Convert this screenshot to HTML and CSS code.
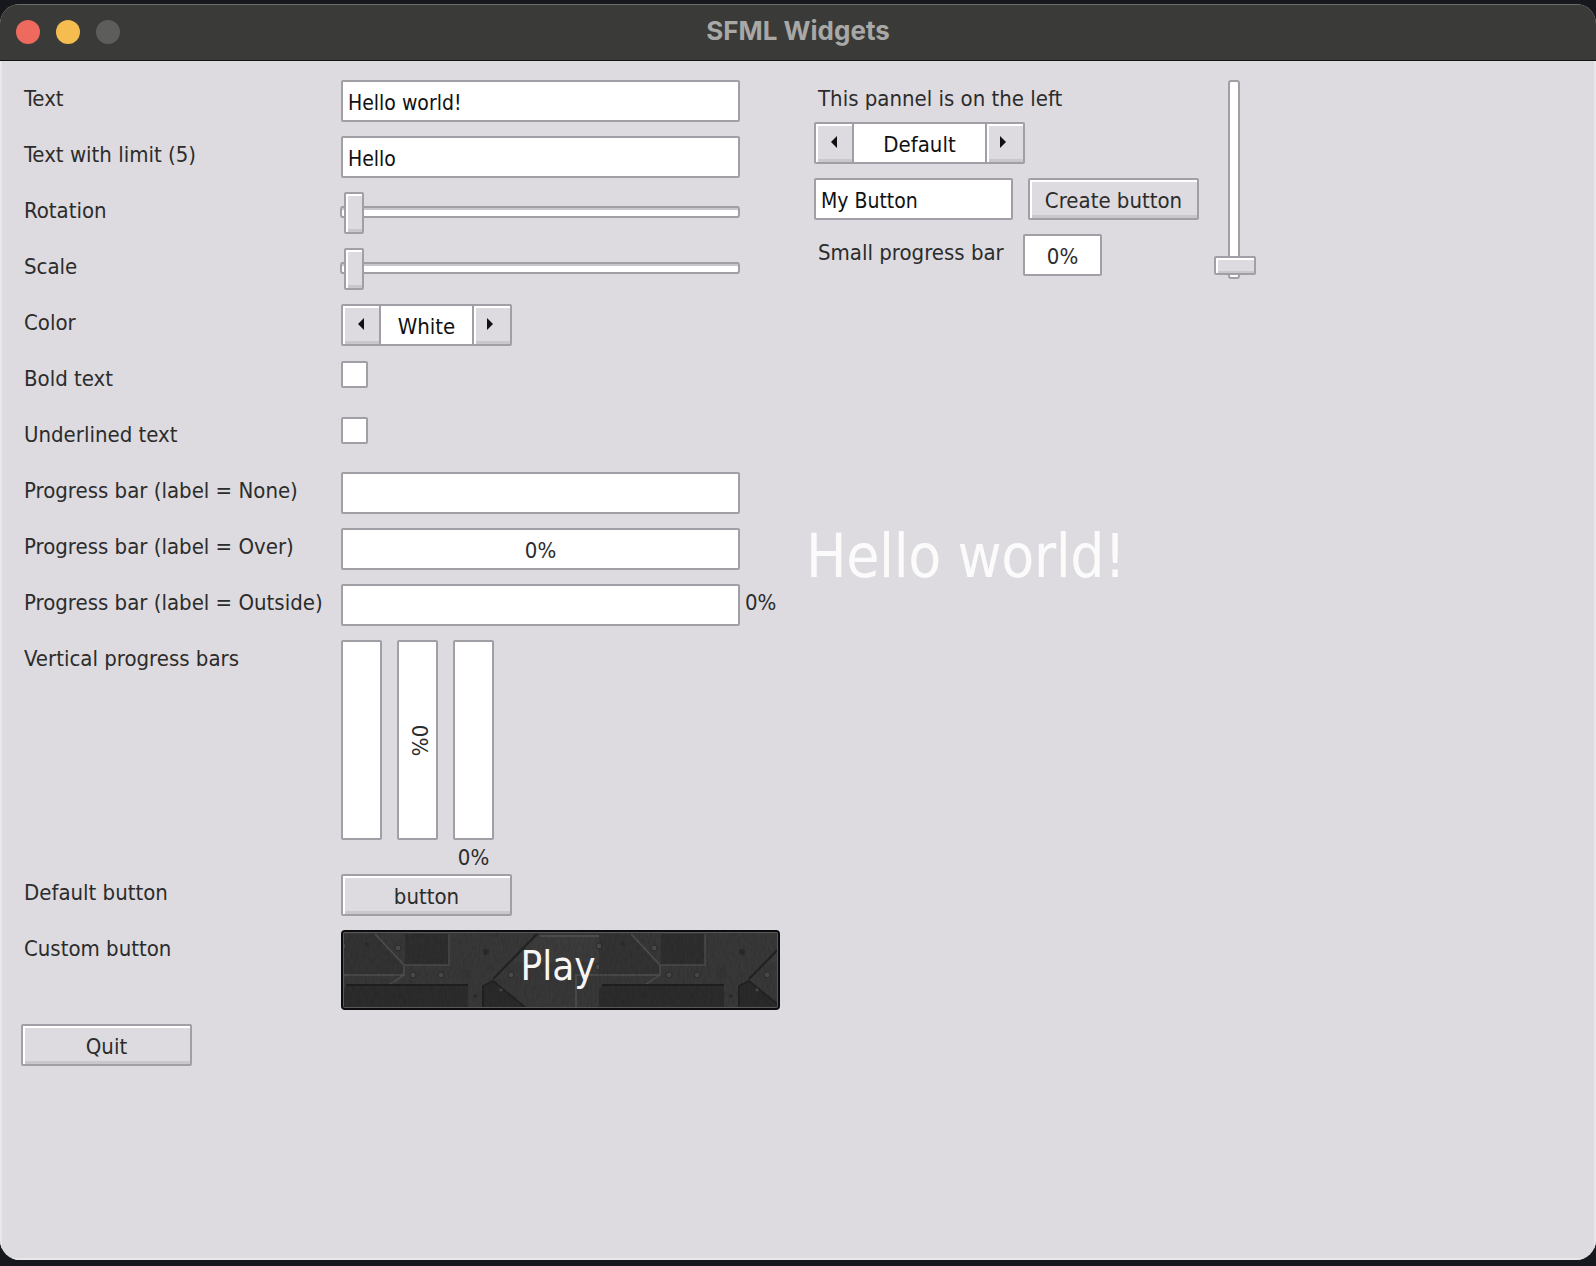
FILE: index.html
```html
<!DOCTYPE html>
<html lang="en">
<head>
    <meta charset="UTF-8">
    <title>SFML Widgets</title>
    <link rel="stylesheet" href="styles.css">
</head>
<body>

    <div class="window">
        <div class="titlebar">
            <div class="lights">
                <span class="light light-close"></span>
                <span class="light light-min"></span>
                <span class="light light-max"></span>
            </div>
            <div class="title">SFML Widgets</div>
        </div>

        <div class="content">
            <!-- left form -->
            <div class="left-col">
                <div class="form">
                    <div class="label">Text</div>
                    <div class="field"><div class="box input wide">Hello world!</div></div>

                    <div class="label">Text with limit (5)</div>
                    <div class="field"><div class="box input wide">Hello</div></div>

                    <div class="label">Rotation</div>
                    <div class="field">
                        <div class="slider wide"><div class="track"></div><div class="thumb"></div></div>
                    </div>

                    <div class="label">Scale</div>
                    <div class="field">
                        <div class="slider wide"><div class="track"></div><div class="thumb"></div></div>
                    </div>

                    <div class="label">Color</div>
                    <div class="field">
                        <div class="selector color-selector">
                            <div class="arrow-btn"><span class="arrow-left"></span></div>
                            <div class="selector-value">White</div>
                            <div class="arrow-btn"><span class="arrow-right"></span></div>
                        </div>
                    </div>

                    <div class="label">Bold text</div>
                    <div class="field"><div class="box checkbox"></div></div>

                    <div class="label">Underlined text</div>
                    <div class="field"><div class="box checkbox"></div></div>

                    <div class="label">Progress bar (label = None)</div>
                    <div class="field"><div class="box wide"></div></div>

                    <div class="label">Progress bar (label = Over)</div>
                    <div class="field"><div class="box wide centered">0%</div></div>

                    <div class="label">Progress bar (label = Outside)</div>
                    <div class="field outside">
                        <div class="box wide"></div>
                        <span class="outside-label">0%</span>
                    </div>

                    <div class="label">Vertical progress bars</div>
                    <div class="field vbars">
                        <div class="vbar-wrap"><div class="box vbar"></div></div>
                        <div class="vbar-wrap"><div class="box vbar centered"><span class="rotated">0%</span></div></div>
                        <div class="vbar-wrap"><div class="box vbar"></div><span class="vbar-label">0%</span></div>
                    </div>

                    <div class="label">Default button</div>
                    <div class="field"><div class="button default-btn">button</div></div>

                    <div class="label">Custom button</div>
                    <div class="field">
                        <div class="play">
                            <svg class="play-bg" width="435" height="76" xmlns="http://www.w3.org/2000/svg">
                                <defs>
                                    <filter id="grain">
                                        <feTurbulence type="fractalNoise" baseFrequency="0.5 0.15" numOctaves="2" seed="4"/>
                                        <feColorMatrix values="0 0 0 0 0  0 0 0 0 0  0 0 0 0 0  1.2 0 0 0 -0.45"/>
                                    </filter>
                                    <pattern id="plate" width="256" height="76" patternUnits="userSpaceOnUse">
                                        <rect width="256" height="76" fill="#383838"/>
                                        <path d="M0 2H32L61 33V43H0Z" fill="#333"/>
                                        <path d="M62 2H106V33H62Z" fill="#2e2e2e"/>
                                        <path d="M62 33H106V2" stroke="#4b4b4b" stroke-width="1.5" fill="none"/>
                                        <path d="M0 43H61V33L32 2M61 43L46 53" stroke="#4f4f4f" stroke-width="1.5" fill="none"/>
                                        <path d="M3 53H125V76H0V58Z" fill="#2c2c2c"/>
                                        <path d="M3 53H125" stroke="#1f1f1f" stroke-width="2"/>
                                        <path d="M140 76V54L150 49L183 76Z" fill="#2a2a2a" stroke="#222" stroke-width="2"/>
                                        <path d="M150 47L194 2" stroke="#222" stroke-width="2" fill="none"/>
                                        <path d="M195 4H265V30H170Z" fill="#3c3c3c"/>
                                        <path d="M197 4H256" stroke="#555" stroke-width="1.5"/>
                                        <path d="M233 76V43H256" stroke="#505050" stroke-width="1.5" fill="none"/>
                                        <g fill="#4a4a4a" stroke="#292929">
                                            <circle cx="55" cy="16" r="3"/>
                                            <circle cx="70" cy="43" r="3"/>
                                            <circle cx="98" cy="43" r="3"/>
                                            <circle cx="168" cy="43" r="3"/>
                                            <circle cx="158" cy="58" r="2"/>
                                            <circle cx="0" cy="14" r="3"/>
                                            <circle cx="256" cy="14" r="3"/>
                                            <circle cx="255" cy="35" r="3"/>
                                        </g>
                                        <g fill="#2a2a2a">
                                            <circle cx="143" cy="20" r="3"/>
                                            <circle cx="122" cy="42" r="5" opacity="0.3"/>
                                            <circle cx="24" cy="12" r="2"/>
                                            <circle cx="132" cy="64" r="2"/>
                                        </g>
                                    </pattern>
                                </defs>
                                <rect width="435" height="76" fill="url(#plate)"/>
                                <rect width="435" height="76" filter="url(#grain)" opacity="0.2"/>
                                <rect x="0.5" y="0.5" width="434" height="75" fill="none" stroke="#585858"/>
                            </svg>
                            <span class="play-text">Play</span>
                        </div>
                    </div>
                </div>

                <div class="button quit-btn">Quit</div>
            </div>

            <!-- right panel -->
            <div class="right-col">
                <div class="panel">
                    <div class="panel-form">
                        <div class="panel-label">This pannel is on the left</div>
                        <div class="selector default-selector">
                            <div class="arrow-btn"><span class="arrow-left"></span></div>
                            <div class="selector-value">Default</div>
                            <div class="arrow-btn"><span class="arrow-right"></span></div>
                        </div>
                        <div class="panel-row">
                            <div class="box input name-input">My Button</div>
                            <div class="button create-btn">Create button</div>
                        </div>
                        <div class="panel-row small-row">
                            <div class="panel-label small-label">Small progress bar</div>
                            <div class="box centered small-bar">0%</div>
                        </div>
                    </div>
                    <div class="vslider"><div class="vtrack"></div><div class="vthumb"></div></div>
                </div>
                <div class="big-text">Hello world!</div>
            </div>
        </div>
    </div>

</body>
</html>
```

FILE: styles.css
```css
* {
    box-sizing: border-box;
}
body {
    margin: 0;
    height: 1266px;
    background-color: #17181d;
    font-family: 'DejaVu Sans Condensed', 'DejaVu Sans', sans-serif;
    font-stretch: condensed;
    font-size: 22px;
    color: #2c2c2c;
    overflow: hidden;
}
.window {
    margin-top: 4px;
    height: 1256px;
    border-radius: 20px;
    overflow: hidden;
    background-color: #dddbdf;
    display: flex;
    flex-direction: column;
}

/* title bar */
.titlebar {
    height: 57px;
    flex: none;
    background-color: #3a3a38;
    border-bottom: 1px solid #111;
    box-shadow: inset 0 1px 0 #6c6c6a;
    display: flex;
    align-items: center;
    position: relative;
}
.lights {
    display: flex;
    gap: 16px;
    padding-left: 16px;
}
.light {
    width: 24px;
    height: 24px;
    border-radius: 50%;
}
.light-close { background-color: #ee6a5f; }
.light-min { background-color: #f5bd4f; }
.light-max { background-color: #5d5d5b; }
.title {
    position: absolute;
    left: 0;
    right: 0;
    padding-bottom: 4px;
    text-align: center;
    font-family: 'Inter', 'Liberation Sans', sans-serif;
    font-stretch: normal;
    font-weight: 700;
    font-size: 26px;
    color: #a8a8a6;
}

/* layout */
.content {
    flex: 1;
    display: flex;
    padding-top: 19px;
    box-shadow: inset 2px 0 0 #e8e7ea, inset -2px 0 0 #e8e7ea, inset 0 -2px 0 #e8e7ea;
}
.left-col {
    width: 804px;
    flex: none;
}
.form {
    display: grid;
    grid-template-columns: 317px 439px;
    row-gap: 14px;
    padding-left: 24px;
}
.label {
    line-height: 24px;
    padding-top: 7px;
}
.field {
    min-height: 42px;
}

/* widgets */
.box {
    background-color: #fff;
    border: 2px solid #a19fa5;
    border-radius: 2px;
    height: 42px;
}
.wide {
    width: 399px;
}
.input {
    padding: 8px 5px 0 5px;
    font-size: 21px;
    line-height: 27px;
    color: #111;
}
.centered {
    display: flex;
    align-items: center;
    justify-content: center;
    padding-top: 2px;
}
.checkbox {
    width: 27px;
    height: 27px;
    margin-top: 1px;
}
.outside {
    display: flex;
}
.outside-label {
    margin-left: 5px;
    line-height: 38px;
}
.slider {
    position: relative;
    height: 42px;
}
.track {
    position: absolute;
    top: 14px;
    left: -1px;
    right: 0;
    height: 12px;
    background-color: #fff;
    border: 2px solid #a19fa5;
    border-radius: 3px;
    box-shadow: inset 0 2px 0 #c8c7cb;
}
.thumb {
    position: absolute;
    top: 0;
    left: 3px;
    width: 20px;
    height: 42px;
    background-color: #dddbdf;
    border: 2px solid #a19fa5;
    border-radius: 2px;
    box-shadow: inset 2px 2px 0 #fff, inset 0 -3px 0 #c8c7cb;
}
.button {
    height: 42px;
    width: 171px;
    background-color: #dddbdf;
    border: 2px solid #a19fa5;
    border-radius: 2px;
    box-shadow: inset 2px 2px 0 #fff, inset 0 -3px 0 #c8c7cb;
    display: flex;
    align-items: center;
    justify-content: center;
    padding-top: 2px;
}
.selector {
    display: flex;
    height: 42px;
    background-color: #fff;
    border: 2px solid #a19fa5;
    border-radius: 2px;
}
.color-selector {
    width: 171px;
}
.default-selector {
    width: 211px;
    margin-top: 11px;
}
.selector-value {
    flex: 1;
    text-align: center;
    line-height: 42px;
    color: #111;
}
.arrow-btn {
    width: 38px;
    background-color: #dddbdf;
    box-shadow: inset 2px 2px 0 #fff, inset 0 -3px 0 #c8c7cb;
    display: flex;
    align-items: center;
    justify-content: center;
    padding-bottom: 3px;
}
.arrow-btn:first-child {
    border-right: 2px solid #a19fa5;
}
.selector-value + .arrow-btn {
    border-left: 2px solid #a19fa5;
    padding-right: 4px;
}
.arrow-left, .arrow-right {
    width: 0;
    height: 0;
    border-top: 6px solid transparent;
    border-bottom: 6px solid transparent;
}
.arrow-left {
    border-right: 6px solid #111;
}
.arrow-right {
    border-left: 6px solid #111;
}

/* vertical bars */
.vbars {
    display: flex;
    gap: 15px;
    height: 220px;
}
.vbar-wrap {
    width: 41px;
    display: flex;
    flex-direction: column;
    align-items: center;
}
.vbar {
    width: 41px;
    height: 200px;
    flex: none;
}
.vbar-label {
    margin-top: 10px;
    line-height: 16px;
}
.rotated {
    transform: rotate(90deg);
    margin: 0 0 2px 5px;
}

/* custom button */
.play {
    position: relative;
    width: 439px;
    height: 80px;
    background-color: #2a2a2a;
    border: 2px solid #0c0c0c;
    border-radius: 4px;
    overflow: hidden;
    display: flex;
    align-items: center;
    justify-content: center;
}
.play-bg {
    position: absolute;
    top: 0;
    left: 0;
}
.play-text {
    position: relative;
    font-size: 40px;
    color: #f6f6f6;
    padding: 0 5px 8px 0;
}
.quit-btn {
    margin: 14px 0 0 21px;
}

/* right panel */
.right-col {
    flex: 1;
}
.panel {
    display: flex;
    gap: 15px;
}
.panel-form {
    width: 396px;
    padding-left: 10px;
}
.panel-label {
    line-height: 24px;
    padding: 7px 0 0 4px;
}
.panel-row {
    display: flex;
    gap: 15px;
    margin-top: 14px;
}
.name-input {
    width: 199px;
}
.create-btn {
    width: 171px;
}
.small-row {
    gap: 0;
}
.small-label {
    width: 209px;
}
.small-bar {
    width: 79px;
}
.vslider {
    position: relative;
    width: 41px;
    height: 199px;
}
.vtrack {
    position: absolute;
    left: 13px;
    top: 0;
    width: 12px;
    height: 199px;
    background-color: #fff;
    border: 2px solid #a19fa5;
    border-radius: 3px;
}
.vthumb {
    position: absolute;
    left: -1px;
    bottom: 4px;
    width: 42px;
    height: 19px;
    background-color: #dddbdf;
    border: 2px solid #a19fa5;
    border-radius: 2px;
    box-shadow: inset 2px 2px 0 #fff, inset 0 -2px 0 #c8c7cb;
}
.big-text {
    margin-top: 242px;
    padding-left: 2px;
    font-size: 60px;
    line-height: 70px;
    letter-spacing: -0.4px;
    color: #fbfbfb;
}
```
